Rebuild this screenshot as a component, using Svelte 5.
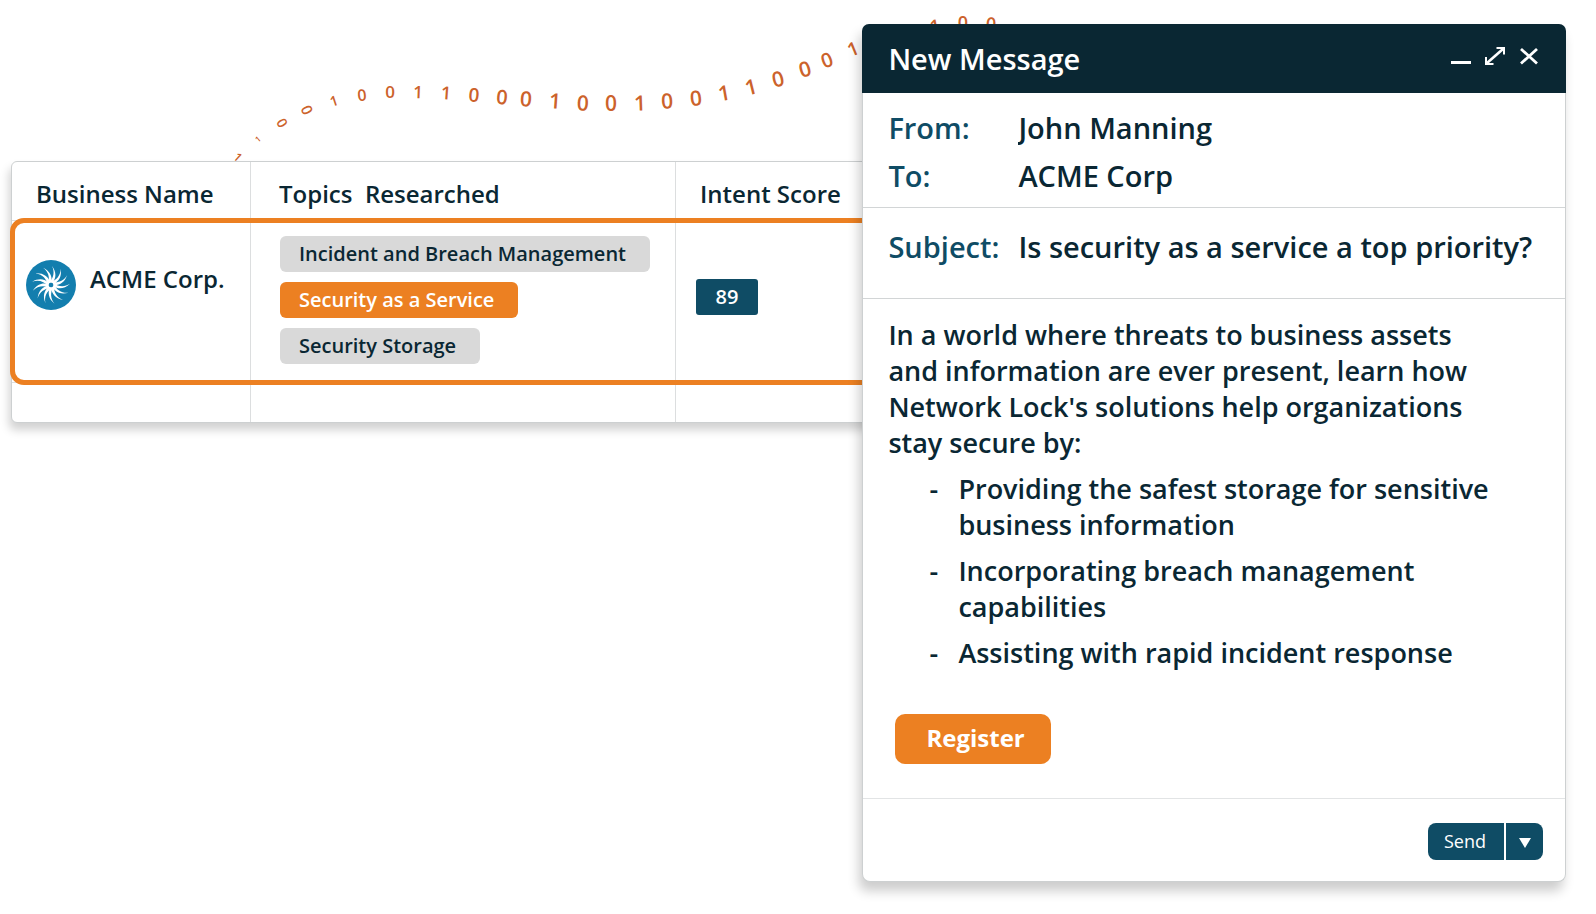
<script>
  const topics = [
    { label: 'Incident and Breach Management', active: false },
    { label: 'Security as a Service', active: true },
    { label: 'Security Storage', active: false }
  ];

  const points = [
    'Providing the safest storage for sensitive business information',
    'Incorporating breach management capabilities',
    'Assisting with rapid incident response'
  ];

  // Digits of the binary trail: [digit, centre x, centre y, font size, rotation]
  const trail = [
    ['1', 238, 157, 12, 42], ['1', 258, 139, 8, -40], ['0', 282, 123, 14, 60],
    ['0', 307, 110, 15, 66], ['1', 334, 101, 14, -18], ['0', 362, 95, 16, -6],
    ['0', 390, 92, 17, 0], ['1', 418, 92, 17, 2], ['1', 446, 93, 18, 4],
    ['0', 474, 95, 19, 5], ['0', 502, 97, 20, 5], ['0', 526, 99, 21, 4],
    ['1', 555, 101, 21, 4], ['0', 583, 103, 21, 3], ['0', 611, 103, 21, 0],
    ['1', 640, 103, 21, -2], ['0', 667, 101, 21, -3], ['0', 696, 98, 21, -6],
    ['1', 724, 93, 21, -10], ['1', 751, 87, 21, -14], ['0', 778, 79, 21, -14],
    ['0', 805, 69, 21, -16], ['0', 827, 60, 20, -20], ['1', 853, 49, 19, -22],
    ['1', 935, 26, 18, -10], ['0', 963, 23, 18, 0], ['0', 991, 24, 18, 4]
  ];

  const blades = Array.from({ length: 13 }, (_, i) => (i * 360) / 13);

  let from = $state('John Manning');
  let to = $state('ACME Corp');
  let subject = $state('Is security as a service a top priority?');
</script>

<main class="page">
  <svg class="trail" width="1040" height="170" aria-hidden="true">
    {#each trail as [digit, x, y, size, turn]}
      <text {x} y={y + size * 0.36} font-size={size} text-anchor="middle" transform="rotate({turn} {x} {y})">{digit}</text>
    {/each}
  </svg>

  <section class="panel">
    <table>
      <thead>
        <tr>
          <th class="name">Business Name</th>
          <th class="topics">Topics&nbsp; Researched</th>
          <th class="score">Intent Score</th>
        </tr>
      </thead>
      <tbody>
        <tr class="selected">
          <td class="company-cell">
            <div class="company">
              <svg width="50" height="50" viewBox="-25 -25 50 50" aria-hidden="true">
                <circle r="25" fill="#137eae" />
                {#each blades as angle}
                  <path d="M-1.500 -3C2.500 -7 4 -13 1 -19C5.500 -13 5.500 -7 1.500 -2Z" fill="#fff" transform="rotate({angle})" />
                {/each}
                <circle r="2" fill="#137eae" />
              </svg>
              <span>ACME Corp.</span>
            </div>
          </td>
          <td class="tags-cell">
            <ul class="tags">
              {#each topics as topic}
                <li class:active={topic.active}>{topic.label}</li>
              {/each}
            </ul>
          </td>
          <td class="score-cell"><span class="badge">89</span></td>
        </tr>
        <tr class="empty"><td></td><td></td><td></td></tr>
      </tbody>
    </table>
  </section>

  <form class="message" onsubmit={(e) => e.preventDefault()}>
    <header>
      <h1>New Message</h1>
      <div class="window-buttons">
        <button type="button" aria-label="Minimize">
          <svg width="20" height="20" viewBox="0 0 20 20"><path d="M0 16.500H20" stroke-width="3" /></svg>
        </button>
        <button type="button" aria-label="Expand">
          <svg width="20" height="20" viewBox="0 0 20 20"><path d="M2 17L18 3" stroke-width="2.600" /><path d="M11.500 2H19V8.500M1 11V18H8.500" stroke-width="2" /></svg>
        </button>
        <button type="button" aria-label="Close">
          <svg width="20" height="20" viewBox="0 0 20 20"><path d="M2 3L18 17.500M18 3L2 17.500" stroke-width="2.800" /></svg>
        </button>
      </div>
    </header>

    <div class="fields people">
      <label for="from">From:</label>
      <input id="from" type="text" bind:value={from} />
      <label for="to">To:</label>
      <input id="to" type="text" bind:value={to} />
    </div>
    <div class="fields subject">
      <label for="subject">Subject:</label>
      <input id="subject" type="text" bind:value={subject} />
    </div>

    <div class="body">
      <p>In a world where threats to business assets and information are ever present, learn how Network Lock's solutions help organizations stay secure by:</p>
      <ul>
        {#each points as point}
          <li>{point}</li>
        {/each}
      </ul>
      <button type="button" class="register">Register</button>
    </div>

    <footer>
      <button type="submit" class="send">Send</button>
      <button type="button" class="more" aria-label="More send options">
        <svg width="12" height="10" viewBox="0 0 12 10"><path d="M0 0H12L6 10Z" /></svg>
      </button>
    </footer>
  </form>
</main>

<style>
  :global(body) {
    margin: 0;
    background: #fff;
  }

  .page {
    --ink: #0a2733;
    --teal: #0f4c65;
    --orange: #ec8022;
    --line: #dcdedf;
    position: relative;
    display: flex;
    align-items: flex-start;
    padding: 24px 30px 32px 11px;
    color: var(--ink);
    font-family: 'Open Sans', sans-serif;
    font-weight: 600;
  }

  button,
  input {
    margin: 0;
    padding: 0;
    border: 0;
    background: none;
    color: inherit;
    font: inherit;
  }

  button {
    cursor: pointer;
  }

  ul {
    margin: 0;
    padding: 0;
    list-style: none;
  }

  .trail {
    position: absolute;
    top: 0;
    left: 0;
    fill: #cc622b;
  }

  .panel {
    position: relative;
    flex: 1;
    min-width: 0;
    margin: 137px -16px 0 0;
    border: 1px solid #cdd0d1;
    border-radius: 6px;
    background: #fff;
    box-shadow: -2px 7px 10px rgba(0, 0, 0, 0.18);
  }

  table {
    width: 100%;
    border-spacing: 0;
    font-size: 24px;
    line-height: 32px;
  }

  th,
  td {
    padding: 0;
    text-align: left;
    vertical-align: top;
    white-space: nowrap;
    border-left: 1px solid var(--line);
  }

  th:first-child,
  td:first-child {
    border-left: 0;
  }

  th {
    padding: 16px 0 10px 28px;
    font-weight: 600;
  }

  th.name {
    width: 214px;
    padding-left: 24px;
  }

  th.topics {
    width: 396px;
  }

  th.score {
    padding-left: 24px;
  }

  .selected {
    position: relative;
  }

  .selected td,
  .empty td {
    border-top: 1px solid var(--line);
  }

  .selected::after {
    content: '';
    position: absolute;
    inset: -2px 0 -3px -2px;
    border: 5px solid var(--orange);
    border-radius: 14px;
    pointer-events: none;
  }

  .company-cell {
    padding: 39px 0 0 14px;
  }

  .company {
    display: flex;
    gap: 14px;
    line-height: 38px;
  }

  .tags-cell {
    padding: 15px 0 18px 29px;
  }

  .tags {
    display: flex;
    flex-direction: column;
    align-items: flex-start;
    gap: 10px;
    font-size: 20px;
    line-height: 36px;
  }

  .tags li {
    padding: 0 24px 0 19px;
    border-radius: 6px;
    background: #d9d9d9;
  }

  .tags .active {
    background: var(--orange);
    color: #fff;
  }

  .score-cell {
    padding: 58px 0 0 20px;
  }

  .badge {
    display: block;
    width: 62px;
    border-radius: 3px;
    background: var(--teal);
    color: #fff;
    font-size: 20px;
    line-height: 36px;
    text-align: center;
  }

  .empty td {
    height: 39px;
  }

  .message {
    position: relative;
    flex: 0 0 45.25%;
    box-sizing: border-box;
    border: 1px solid #cdd0d1;
    border-top: 0;
    border-radius: 8px;
    background: #fff;
    box-shadow: -3px 9px 12px rgba(0, 0, 0, 0.2);
    font-size: 29px;
  }

  header {
    display: flex;
    align-items: center;
    justify-content: space-between;
    margin: 0 -1px;
    padding: 15px 27px 14px 26px;
    border-radius: 7px 7px 0 0;
    background: #0a2733;
    color: #fff;
  }

  h1 {
    margin: 0;
    font-size: 29px;
    font-weight: 600;
    line-height: 40px;
  }

  .window-buttons {
    display: flex;
    gap: 14px;
    padding-bottom: 6px;
  }

  .window-buttons svg {
    display: block;
    fill: none;
    stroke: #fff;
  }

  .fields {
    display: grid;
    grid-template-columns: 130px 1fr;
    row-gap: 8px;
    border-bottom: 1px solid #d2d5d6;
    line-height: 40px;
  }

  .fields label {
    color: var(--teal);
  }

  .fields input {
    width: 100%;
    height: 40px;
  }

  .people {
    padding: 15px 16px 11px 25px;
  }

  .subject {
    padding: 19px 16px 31px 25px;
  }

  .body {
    padding: 18px 60px 34px 25px;
    border-bottom: 1px solid #e2e4e5;
    font-size: 27px;
    line-height: 36px;
  }

  .body p {
    margin: 0 0 10px;
  }

  .body ul {
    display: grid;
    gap: 10px;
    padding-left: 41px;
  }

  .body li {
    display: flex;
  }

  .body li::before {
    content: '-';
    flex: 0 0 29px;
  }

  .register {
    margin: 43px 0 0 7px;
    padding: 0 26px 2px 31px;
    border-radius: 10px;
    background: var(--orange);
    color: #fff;
    font-size: 24px;
    font-weight: 700;
    line-height: 48px;
  }

  footer {
    display: flex;
    justify-content: flex-end;
    gap: 2px;
    padding: 24px 22px 21px;
    color: #fff;
    font-size: 18px;
    font-weight: 400;
    line-height: 37px;
  }

  footer button {
    background: var(--teal);
  }

  .send {
    padding: 0 18px 0 16px;
    border-radius: 8px 0 0 8px;
  }

  .more {
    width: 37px;
    border-radius: 0 8px 8px 0;
  }

  .more svg {
    fill: #fff;
  }
</style>
